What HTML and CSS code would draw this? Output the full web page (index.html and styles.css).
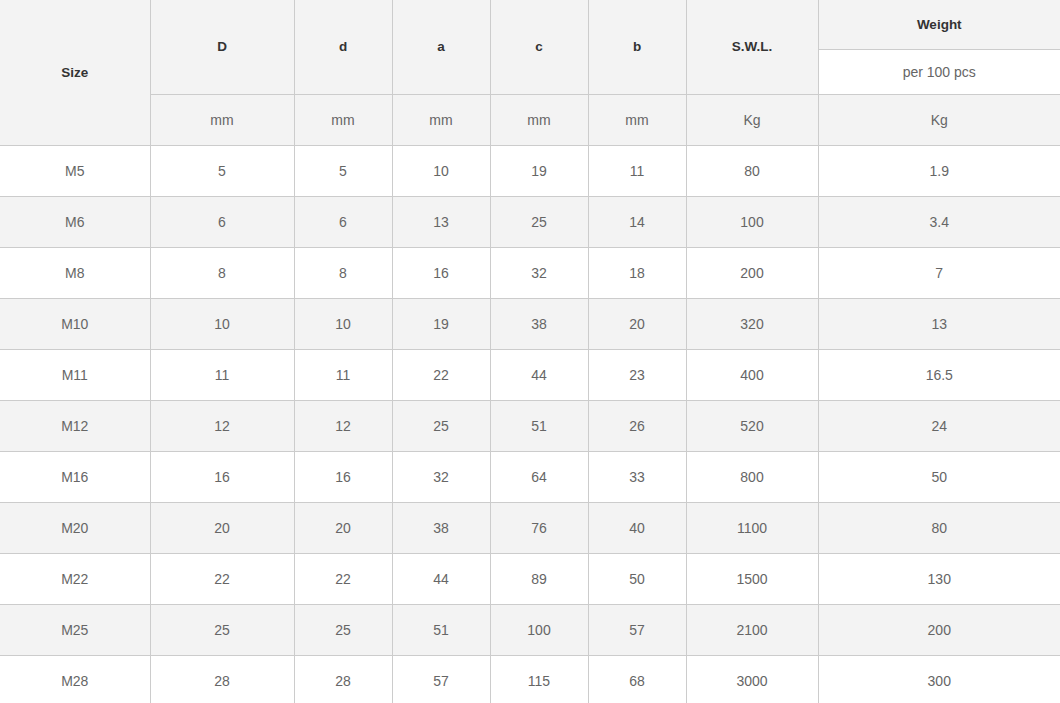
FILE: index.html
```html
<!DOCTYPE html>
<html>
<head>
<meta charset="utf-8">
<link rel="stylesheet" href="styles.css">
</head>
<body>
<table class="spec">
  <colgroup>
    <col class="c-size"><col class="c-D"><col class="c-n"><col class="c-n"><col class="c-n"><col class="c-n"><col class="c-swl"><col class="c-w">
  </colgroup>
  <thead>
    <tr class="h1">
      <th rowspan="3" class="grey">Size</th>
      <th rowspan="2" class="grey">D</th>
      <th rowspan="2" class="grey">d</th>
      <th rowspan="2" class="grey">a</th>
      <th rowspan="2" class="grey">c</th>
      <th rowspan="2" class="grey">b</th>
      <th rowspan="2" class="grey">S.W.L.</th>
      <th class="grey">Weight</th>
    </tr>
    <tr class="h2">
      <td class="white">per 100 pcs</td>
    </tr>
    <tr class="h3 grey">
      <td>mm</td><td>mm</td><td>mm</td><td>mm</td><td>mm</td><td>Kg</td><td>Kg</td>
    </tr>
  </thead>
  <tbody>
    <tr><td>M5</td><td>5</td><td>5</td><td>10</td><td>19</td><td>11</td><td>80</td><td>1.9</td></tr>
    <tr><td>M6</td><td>6</td><td>6</td><td>13</td><td>25</td><td>14</td><td>100</td><td>3.4</td></tr>
    <tr><td>M8</td><td>8</td><td>8</td><td>16</td><td>32</td><td>18</td><td>200</td><td>7</td></tr>
    <tr><td>M10</td><td>10</td><td>10</td><td>19</td><td>38</td><td>20</td><td>320</td><td>13</td></tr>
    <tr><td>M11</td><td>11</td><td>11</td><td>22</td><td>44</td><td>23</td><td>400</td><td>16.5</td></tr>
    <tr><td>M12</td><td>12</td><td>12</td><td>25</td><td>51</td><td>26</td><td>520</td><td>24</td></tr>
    <tr><td>M16</td><td>16</td><td>16</td><td>32</td><td>64</td><td>33</td><td>800</td><td>50</td></tr>
    <tr><td>M20</td><td>20</td><td>20</td><td>38</td><td>76</td><td>40</td><td>1100</td><td>80</td></tr>
    <tr><td>M22</td><td>22</td><td>22</td><td>44</td><td>89</td><td>50</td><td>1500</td><td>130</td></tr>
    <tr><td>M25</td><td>25</td><td>25</td><td>51</td><td>100</td><td>57</td><td>2100</td><td>200</td></tr>
    <tr><td>M28</td><td>28</td><td>28</td><td>57</td><td>115</td><td>68</td><td>3000</td><td>300</td></tr>
  </tbody>
</table>
</body>
</html>
```
FILE: styles.css
```css
html, body {
  margin: 0;
  padding: 0;
  background: #fff;
}
.spec {
  border-collapse: collapse;
  border-style: hidden;
  table-layout: fixed;
  width: 1060px;
  font-family: "Liberation Sans", Arial, sans-serif;
  font-size: 14px;
  color: #666;
}
.c-size { width: 150px; }
.c-D { width: 144px; }
.c-n { width: 98px; }
.c-swl { width: 132px; }
.c-w { width: 242px; }
.spec th, .spec td {
  border: 1px solid #ccc;
  text-align: center;
  vertical-align: middle;
  padding: 0;
}
.spec th {
  font-size: 13.5px;
  font-weight: bold;
  color: #333;
}
.grey, .grey td { background: #f3f3f3; }
.white { background: #fff; }
.h1 { height: 49px; }
.h2 { height: 45px; }
.h3 { height: 51px; }
.spec tbody tr { height: 51px; }
.spec tbody tr:nth-child(even) { background: #f3f3f3; }
```
